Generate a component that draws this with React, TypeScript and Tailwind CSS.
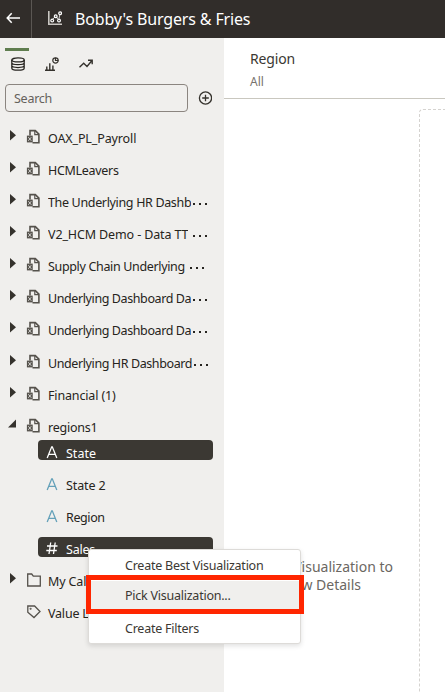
import React from "react";

type SourceRow = { label: string; dots?: string; tracking: string; height: string };

const sources: SourceRow[] = [
  { label: "OAX_PL_Payroll", tracking: "tracking-[-0.12px]", height: "h-8" },
  { label: "HCMLeavers", tracking: "tracking-[-0.3px]", height: "h-8" },
  { label: "The Underlying HR Dashb", dots: "ml-[2px]", tracking: "tracking-[-0.34px]", height: "h-8" },
  { label: "V2_HCM Demo - Data TT", dots: "ml-[5px]", tracking: "tracking-[-0.12px]", height: "h-8" },
  { label: "Supply Chain Underlying", dots: "ml-[5px]", tracking: "tracking-[-0.34px]", height: "h-8" },
  { label: "Underlying Dashboard Da", dots: "ml-[2px]", tracking: "tracking-[-0.4px]", height: "h-8" },
  { label: "Underlying Dashboard Da", dots: "ml-[2px]", tracking: "tracking-[-0.4px]", height: "h-[33px]" },
  { label: "Underlying HR Dashboard", dots: "ml-[2px]", tracking: "tracking-[-0.4px]", height: "h-8" },
  { label: "Financial (1)", tracking: "tracking-[-0.15px]", height: "h-8" },
];

function FileIcon() {
  return (
    <svg className="mt-[7px] h-4 w-4 shrink-0" viewBox="0 0 16 16" fill="none" stroke="#55524c" strokeWidth="1.6">
      <path d="M4 6.500V1.600h5.300L12.900 5.200v8.600H6.500" />
      <path d="M8.800 1.500v4.200h4.200" strokeWidth="1.200" />
      <rect x="1.500" y="7.200" width="4.600" height="5.600" fill="#55524c" strokeWidth="1.200" />
      <path d="M2.300 8.200l3 3.600M5.300 8.200l-3 3.600" stroke="#f0efed" strokeWidth="0.8" />
    </svg>
  );
}

function Caret({ open = false }: { open?: boolean }) {
  return (
    <svg className="mt-[7px] h-3 w-[10px] shrink-0" viewBox="0 0 10 12" fill="#35322d">
      {open ? <path d="M8 1.500v8H0z" /> : <path d="M2 1l6 5.300L2 11.600z" />}
    </svg>
  );
}

function Dots({ className }: { className: string }) {
  return (
    <span className={`${className} mt-[17px] flex shrink-0 gap-[4px]`}>
      <i className="h-[2px] w-[2px] bg-[#262420]" />
      <i className="h-[2px] w-[2px] bg-[#262420]" />
      <i className="h-[2px] w-[2px] bg-[#262420]" />
    </span>
  );
}

type FieldProps = { label: string; numeric?: boolean; selected?: boolean; tracking?: string };

function Field({ label, numeric = false, selected = false, tracking = "tracking-normal" }: FieldProps) {
  return (
    <div className={`flex h-8 items-start pl-[38px] ${numeric ? "pt-[4px]" : "pt-[3px]"}`}>
      <div
        className={`flex h-5 w-[175px] items-start rounded-[4px] pl-2 ${numeric ? "pt-[4px]" : "pt-[5px]"} ${selected ? "bg-[#3b3833] text-white" : "text-[#262420]"}`}
      >
        <svg className="h-[14px] w-3 shrink-0" viewBox="0 0 12 14" fill="none" stroke={selected ? "#ffffff" : "#64a1b9"} strokeWidth="1.3">
          {numeric ? <path d="M4.700 1.500L3 13M9.200 1.500L7.500 13M1 5h10.500M.3 9.500h10.500" /> : <path d="M1.200 13L5.700 1.800h.6L10.800 13M2.600 9.300h6.800" />}
        </svg>
        <span className={`ml-2 text-[12.5px] leading-[18px] ${tracking}`}>{label}</span>
      </div>
    </div>
  );
}

export default function App() {
  return (
    <div className="relative flex h-[692px] w-[445px] flex-col overflow-hidden bg-white font-['Noto_Sans','Open_Sans',sans-serif] text-[#262420]">
      <header className="flex h-[38px] shrink-0 bg-[#312d2a] text-white">
        <div className="flex w-8 shrink-0 border-r border-[#5b5753] pl-[6px] pt-[12px]">
          <svg className="h-3 w-[14px]" viewBox="0 0 14 12" fill="none" stroke="currentColor" strokeWidth="1.5">
            <path d="M14 6H1.500M5.700 1.200L1.200 6l4.500 4.800" />
          </svg>
        </div>
        <svg className="ml-4 mt-[11px] h-[14px] w-[14px] shrink-0" viewBox="0 0 14 14" fill="none" stroke="#ffffff" strokeWidth="1.2">
          <path d="M.8 0v13.200H14" stroke="#c9c6c2" strokeWidth="1.600" />
          <path d="M4.700 8.300L7 5.800M8.400 5.900l1.600 2.100M11 7.600l.7-3.600" strokeWidth="0.8" />
          <circle cx="4.200" cy="9.600" r="1.400" />
          <circle cx="7.700" cy="5.300" r="1.400" />
          <circle cx="11" cy="9.600" r="1.400" />
          <circle cx="12.100" cy="2.200" r="1.400" />
        </svg>
        <h1 className="ml-[13px] mt-[8px] whitespace-nowrap text-[16px] leading-[22px] tracking-[-0.15px]">Bobby's Burgers &amp; Fries</h1>
      </header>

      <div className="flex min-h-0 flex-1">
        <aside className="w-[224px] shrink-0 bg-[#f0efed]">
          <nav className="flex h-[46px] pl-[5px] pt-[10px] text-[#35322d]">
            <div className="flex h-7 w-6 flex-col border-t-[3px] border-[#5f7d4f]">
              <svg className="ml-[6px] mt-[6px] h-[14px] w-[14px]" viewBox="0 0 14 14" fill="none" stroke="#262420" strokeWidth="1.4">
                <ellipse cx="7" cy="2.900" rx="6.2" ry="2" />
                <path d="M.8 3v8.200c0 1.200 2.800 2 6.200 2s6.200-.8 6.200-2V3M.8 5.800C.8 7 3.600 7.700 7 7.700s6.200-.7 6.200-1.900M.8 8.600c0 1.200 2.800 1.900 6.200 1.900s6.200-.7 6.200-1.900" strokeWidth="1.250" />
              </svg>
            </div>
            <svg className="ml-4 mt-[9px] h-[14px] w-[14px]" viewBox="0 0 14 14" fill="none" stroke="currentColor" strokeWidth="1.2">
              <path d="M0 13.200h10M1.800 13V9.500M4.800 13V6.200M7.900 13V8.600" strokeWidth="1.400" />
              <circle cx="10.500" cy="3.500" r="2.700" />
              <path d="M10.500 .7v2.800h2.800" />
            </svg>
            <svg className="ml-5 mt-[11px] h-[10px] w-[14px]" viewBox="0 0 14 10" fill="none" stroke="currentColor" strokeWidth="1.4">
              <path d="M.5 8.200l4.200-4 3.300 3.200L13 1.500M9 1.200h4.200v4" />
            </svg>
          </nav>
          <div className="flex h-7 items-center pl-[5px]">
            <div className="h-7 w-[183px] rounded-[4px] border border-[#8b8580] pl-[8px] text-[12.5px] leading-[28px] tracking-[-0.25px] text-[#65615c]">
              Search
            </div>
            <svg className="ml-[10px] h-[14px] w-[14px]" viewBox="0 0 14 14" fill="none" stroke="#35322d" strokeWidth="1.3">
              <circle cx="7.500" cy="7" r="6.100" />
              <path d="M7.500 3.700v6.600M4.200 7h6.600" />
            </svg>
          </div>

          <div className="pt-[10px]">
            {sources.map((s, i) => (
              <div key={i} className={`flex pl-2 ${s.height}`}>
                <Caret />
                <span className="w-2 shrink-0" />
                <FileIcon />
                <span className={`ml-[6px] mt-[7px] h-[17px] overflow-hidden whitespace-nowrap text-[12.5px] leading-[19px] ${s.tracking}`}>{s.label}</span>
                {s.dots && <Dots className={s.dots} />}
              </div>
            ))}
            <div className="flex h-[26px] pl-2">
              <Caret open />
              <span className="w-2 shrink-0" />
              <FileIcon />
              <span className="ml-[6px] mt-[7px] h-[17px] overflow-hidden text-[12.5px] leading-[19px] tracking-[-0.25px]">regions1</span>
            </div>
            <Field label="State" selected />
            <Field label="State 2" tracking="tracking-[-0.1px]" />
            <Field label="Region" tracking="tracking-[-0.4px]" />
            <Field label="Sales" numeric selected tracking="tracking-[-0.2px]" />
            <div className="flex h-8 pl-2">
              <Caret />
              <svg className="ml-[9px] mt-[8px] h-[14px] w-[14px] shrink-0" viewBox="0 0 14 14" fill="none" stroke="#55524c" strokeWidth="1.3">
                <path d="M.7 13V1h4l1.600 2.200h7V13z" />
              </svg>
              <span className="ml-[7px] mt-[7px] whitespace-nowrap text-[12.5px] leading-[19px] tracking-[-0.15px]">My Calculations</span>
            </div>
            <div className="flex h-8 pl-[27px]">
              <svg className="mt-[8px] h-[14px] w-[14px] shrink-0" viewBox="0 0 14 14" fill="none" stroke="#55524c" strokeWidth="1.3">
                <path d="M.8 1h6.800l5.400 5.500-6 6L.8 7.200z" />
                <circle cx="3.600" cy="3.800" r=".4" fill="#55524c" />
              </svg>
              <span className="ml-[7px] mt-[7px] whitespace-nowrap text-[12.5px] leading-[19px] tracking-[-0.2px]">Value Labels</span>
            </div>
          </div>
        </aside>

        <main className="flex min-w-0 flex-1 flex-col">
          <div className="h-[61px] border-b border-[#c9c7bf] pl-[26px] pt-[11px]">
            <div className="text-[14px] leading-5 tracking-[-0.15px] text-[#3b3833]">Region</div>
            <div className="mt-[4px] text-[12px] leading-[18px] text-[#77736e]">All</div>
          </div>
          <div className="flex flex-1 pt-[10px]">
            <div className="w-[195px] shrink-0 pt-[449px] text-right text-[14px] leading-[18px] text-[#6b6762]">
              <p className="mr-[26px] whitespace-nowrap">Add a Visualization to</p>
              <p className="mr-[58px] whitespace-nowrap">View Details</p>
            </div>
            <div className="w-[40px] shrink-0 rounded-tl-[4px] border-l border-t border-dashed border-[#d5d3d0]" />
          </div>
        </main>
      </div>

      <div className="absolute left-[88px] top-[549px] h-[95px] w-[213px] rounded-[3px] border border-[#dddbd8] bg-white text-[12.5px] tracking-[-0.24px] text-[#3b3833] shadow-[0_2px_5px_rgba(0,0,0,0.12)]">
        <div className="h-[31px] pl-[36px] leading-[32px]">Create Best Visualization</div>
        <div className="h-[30px] bg-[#f0efed] pl-[36px] leading-[30px]">Pick Visualization...</div>
        <div className="pl-[36px] leading-[36px]">Create Filters</div>
      </div>
      <div className="absolute left-[86px] top-[575px] h-[39px] w-[218px] border-[5px] border-[#ff2600]" />
    </div>
  );
}
